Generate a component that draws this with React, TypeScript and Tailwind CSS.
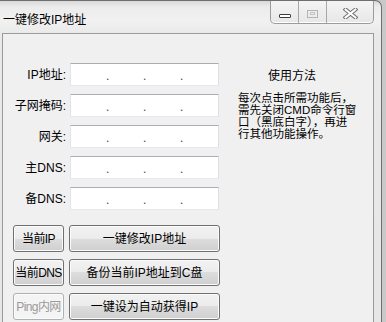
import { Fragment } from "react";

const fields = ["IP地址:", "子网掩码:", "网关:", "主DNS:", "备DNS:"];

const buttonRows = [
  { small: "当前IP", big: "一键修改IP地址", disabled: false },
  { small: "当前DNS", big: "备份当前IP地址到C盘", disabled: false },
  { small: "Ping内网", big: "一键设为自动获得IP", disabled: true },
];

const helpLines = ["每次点击所需功能后，", "需先关闭CMD命令行窗", "口（黑底白字），再进", "行其他功能操作。"];

const btn =
  "flex h-[27px] items-center justify-center whitespace-nowrap rounded-[3px] border text-[12px] leading-none shadow-[inset_0_0_0_1px_#fbfbfb]";
const btnOn =
  "border-[#707070] bg-[linear-gradient(#f2f2f2_0%,#ebebeb_50%,#dddddd_50%,#cfcfcf_100%)] text-black";
const btnOff = "border-[#adb2b5] bg-[#f4f4f4] text-[#9a9a9a]";

function IpBox() {
  return (
    <div className="flex h-[23px] w-[149px] items-center border border-[#abadb3] border-r-[#dbdfe6] border-b-[#e3e9ef] border-l-[#e2e3ea] bg-white px-[1px] text-[12px] text-[#444]">
      {[0, 1, 2].map((i) => (
        <Fragment key={i}>
          <span className="flex-1" />
          <span className="w-[3px] translate-y-[1px] text-center leading-none">.</span>
        </Fragment>
      ))}
      <span className="flex-1" />
    </div>
  );
}

function CaptionButtons() {
  return (
    <div className="mr-[7px] flex h-[23px] self-start overflow-hidden rounded-b-[5px] border border-t-0 border-[#9b9b9b] bg-[linear-gradient(#f4f4f4,#e7e7e7)] shadow-[inset_0_-1px_0_#ffffff]">
      <div className="flex w-[28px] items-center justify-center border-r border-[#a8a8a8]">
        <span className="mt-[8px] h-[4px] w-[12px] rounded-[1px] border border-[#3a3a3a] bg-white" />
      </div>
      <div className="flex w-[28px] items-center justify-center border-r border-[#a8a8a8]">
        <span className="mt-[3px] flex h-[8px] w-[11px] items-center justify-center border border-[#b4b4b4]">
          <span className="h-[3px] w-[5px] border border-[#c4c4c4]" />
        </span>
      </div>
      <div className="flex w-[46px] items-center justify-center">
        <svg width="15" height="11" viewBox="0 0 15 11" className="mt-[3px]">
          <path d="M2.5 1.5 L12.5 9.5 M12.5 1.5 L2.5 9.5" stroke="#6a6a6a" strokeWidth="4" strokeLinecap="square" />
          <path d="M2.5 1.5 L12.5 9.5 M12.5 1.5 L2.5 9.5" stroke="#ffffff" strokeWidth="2" strokeLinecap="square" />
        </svg>
      </div>
    </div>
  );
}

export default function App() {
  return (
    <div className="flex h-[322px] w-[386px] overflow-hidden bg-[linear-gradient(90deg,#7d7d7d,#c9c9c9)] font-['Liberation_Sans','Noto_Sans_CJK_SC',sans-serif]">
      <div className="flex h-[340px] w-[382px] shrink-0 flex-col rounded-tr-[7px] border-r border-t border-[#6e6e6e] bg-[linear-gradient(#d9d9d9_0px,#ececec_6px,#f1f1f1_20px,#e9e9e9_34px,#e6e6e6_100%)]">
        <div className="flex h-[32px] shrink-0 items-start justify-between">
          <div className="pl-[3px] pt-[12px] text-[12px] leading-[14px] text-black">一键修改IP地址</div>
          <CaptionButtons />
        </div>

        <div className="ml-[2px] flex w-[372px] flex-1 border border-b-0 border-[#9a9a9a] bg-[#f0f0f0]">
          <div className="flex w-[218px] flex-col pt-[29px]">
            <div className="flex flex-col gap-[8px]">
              {fields.map((f) => (
                <div key={f} className="flex items-center">
                  <div className="w-[63px] text-right text-[12px] leading-none text-black">{f}</div>
                  <div className="ml-[4px]">
                    <IpBox />
                  </div>
                </div>
              ))}
            </div>

            <div className="mt-[15px] flex flex-col gap-[7px] pl-[10px]">
              {buttonRows.map((r) => (
                <div key={r.small} className="flex gap-[5px]">
                  <div className={`${btn} w-[51px] tracking-[-0.6px] ${r.disabled ? btnOff : btnOn}`}>{r.small}</div>
                  <div className={`${btn} w-[151px] ${btnOn}`}>{r.big}</div>
                </div>
              ))}
            </div>
          </div>

          <div className="ml-[17px] flex w-[130px] flex-col pt-[35px] text-[12px] text-black">
            <div className="pl-[30px] leading-[14px]">使用方法</div>
            <div className="mt-[9px] flex flex-col">
              {helpLines.map((l) => (
                <div key={l} className="h-[12px] whitespace-nowrap text-[11.5px] leading-[12px]">
                  {l}
                </div>
              ))}
            </div>
          </div>
        </div>
      </div>
    </div>
  );
}
